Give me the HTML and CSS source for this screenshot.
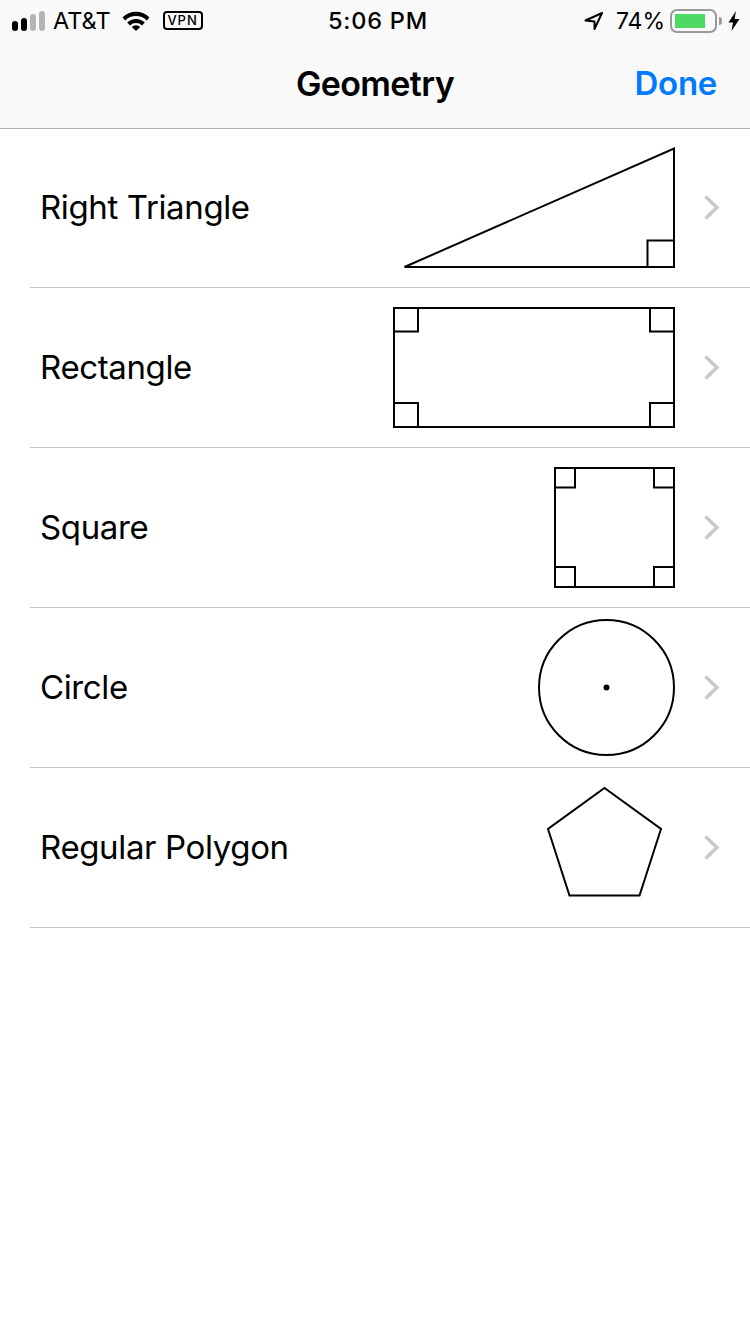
FILE: index.html
```html
<!DOCTYPE html>
<html lang="en">
<head>
<meta charset="utf-8">
<title>Geometry</title>
<link rel="stylesheet" href="styles.css">
</head>
<body>
<header class="nav">
  <div class="status">
    <div class="status-left">
      <svg class="signal" width="33" height="20" viewBox="0 0 33 20"><rect x="0" y="10" width="6" height="10" rx="3" fill="#000"/><rect x="9" y="7" width="6" height="13" rx="3" fill="#000"/><rect x="18" y="3" width="6" height="17" rx="3" fill="#b5b5b5"/><rect x="27" y="0" width="6" height="20" rx="3" fill="#b5b5b5"/></svg>
      <span class="carrier">AT&amp;T</span>
      <svg class="wifi" width="28" height="20" viewBox="0 0 28 20"><path d="M0.500 6.500A19 19 0 0 1 27.500 6.500L24.800 9.500A15 15 0 0 0 3.200 9.500Z M5.200 11.500A12.500 12.500 0 0 1 22.800 11.500L20 14.400A8.500 8.500 0 0 0 8 14.400Z M9.800 16A6 6 0 0 1 18.200 16L14 20Z" fill="#000"/></svg>
      <span class="vpn">VPN</span>
    </div>
    <div class="clock">5:06 PM</div>
    <div class="status-right">
      <svg class="loc" width="20" height="20" viewBox="0 0 20 20"><path d="M18 2L1.500 9.500L10.500 10.500L10.500 18Z" fill="none" stroke="#000" stroke-width="2" stroke-linejoin="round"/></svg>
      <span class="pct">74%</span>
      <div class="battery"><div class="level"></div></div>
      <div class="nub"></div>
      <svg class="bolt" width="12" height="20" viewBox="0 0 12 20"><path d="M8 0L0.500 11.500H5L3.500 20L11.500 8H6.500Z" fill="#000"/></svg>
    </div>
  </div>
  <div class="bar">
    <h1 class="title">Geometry</h1>
    <a class="done">Done</a>
  </div>
</header>
<ul class="list">
  <li class="row">
    <span class="label">Right Triangle</span>
    <svg class="shape" width="300" height="159" viewBox="380 128 300 159"><path d="M404.500 267H674V148.500Z M647.500 267V240.500H674"/></svg>
    <svg class="chev" width="18" height="28" viewBox="0 0 18 28"><path d="M1.500 2.500L13 13.500L1.500 24.500"/></svg>
  </li>
  <li class="row">
    <span class="label">Rectangle</span>
    <svg class="shape" width="300" height="159" viewBox="380 288 300 159"><path d="M394 308H674V427H394Z M394 331.500H418V308 M650 308V331.500H674 M394 403H418V427 M650 427V403H674"/></svg>
    <svg class="chev" width="18" height="28" viewBox="0 0 18 28"><path d="M1.500 2.500L13 13.500L1.500 24.500"/></svg>
  </li>
  <li class="row">
    <span class="label">Square</span>
    <svg class="shape" width="300" height="159" viewBox="380 448 300 159"><path d="M555 468H674V587H555Z M555 487.500H575V468 M654 468V487.500H674 M555 567H575V587 M654 587V567H674"/></svg>
    <svg class="chev" width="18" height="28" viewBox="0 0 18 28"><path d="M1.500 2.500L13 13.500L1.500 24.500"/></svg>
  </li>
  <li class="row">
    <span class="label">Circle</span>
    <svg class="shape" width="300" height="159" viewBox="380 608 300 159"><circle cx="606.500" cy="687.500" r="67.500"/><circle class="dot" cx="606.500" cy="687.500" r="3"/></svg>
    <svg class="chev" width="18" height="28" viewBox="0 0 18 28"><path d="M1.500 2.500L13 13.500L1.500 24.500"/></svg>
  </li>
  <li class="row">
    <span class="label">Regular Polygon</span>
    <svg class="shape" width="300" height="159" viewBox="380 768 300 159"><path d="M604.500 788L661 829L639.500 895.500H569.500L548 829Z"/></svg>
    <svg class="chev" width="18" height="28" viewBox="0 0 18 28"><path d="M1.500 2.500L13 13.500L1.500 24.500"/></svg>
  </li>
</ul>
</body>
</html>
```
FILE: styles.css
```css
* { box-sizing: border-box; }
html, body { margin: 0; padding: 0; background: #fff; }
body { width: 750px; height: 1334px; overflow: hidden; font-family: "Liberation Sans", Arial, sans-serif; color: #000; }
.nav { height: 129px; background: #f9f9f9; border-bottom: 1px solid #b2b2b2; }
.status { height: 41px; display: grid; grid-template-columns: 1fr auto 1fr; align-items: center; font-size: 24px; }
.status-left { display: flex; align-items: center; padding-left: 12px; }
.status-right { display: flex; align-items: center; justify-content: flex-end; padding-right: 10px; }
.carrier { margin-left: 8px; font-family: Inter, "Liberation Sans", sans-serif; font-size: 23.500px; }
.wifi { margin-left: 11px; }
.vpn { margin-left: 13px; width: 40px; height: 19px; border: 2px solid #000; border-radius: 4px; font-size: 13px; font-family: Inter, sans-serif; font-weight: 500; letter-spacing: 1px; line-height: 15px; text-align: center; }
.clock { margin-left: 6px; font-family: Inter, sans-serif; font-size: 23.500px; font-weight: 500; letter-spacing: 0.8px; }
.pct { margin-left: 12px; font-family: Inter, sans-serif; font-size: 23px; }
.battery { margin-left: 5px; width: 47px; height: 24px; border: 2px solid #999; border-radius: 7px; padding: 3px; }
.level { width: 30px; height: 100%; background: #4cd964; }
.nub { margin-left: 2px; width: 3px; height: 8px; background: #999; border-radius: 0 3px 3px 0; }
.bolt { margin-left: 6px; }
.bar { height: 87px; display: flex; align-items: center; justify-content: center; position: relative; padding-bottom: 3px; }
.title { margin: 0; font-size: 34px; font-weight: 600; font-family: Inter, sans-serif; letter-spacing: -0.6px; }
.done { position: absolute; right: 33px; top: 22px; font-size: 33px; font-weight: 600; font-family: Inter, sans-serif; color: #007aff; letter-spacing: -0.3px; }
.list { margin: -1px 0 0; padding: 0 0 0 30px; list-style: none; }
.row { height: 160px; display: flex; align-items: center; border-bottom: 1px solid #c8c7cc; padding-left: 10px; }
.label { font-family: Inter, sans-serif; font-size: 33px; letter-spacing: -0.37px; flex: 1; padding-bottom: 2px; }
.shape { fill: none; stroke: #000; stroke-width: 2; display: block; }
.shape .dot { fill: #000; stroke: none; }
.chev { margin-left: 24px; margin-right: 28px; fill: none; stroke: #c7c7cc; stroke-width: 3.500; display: block; }
```
